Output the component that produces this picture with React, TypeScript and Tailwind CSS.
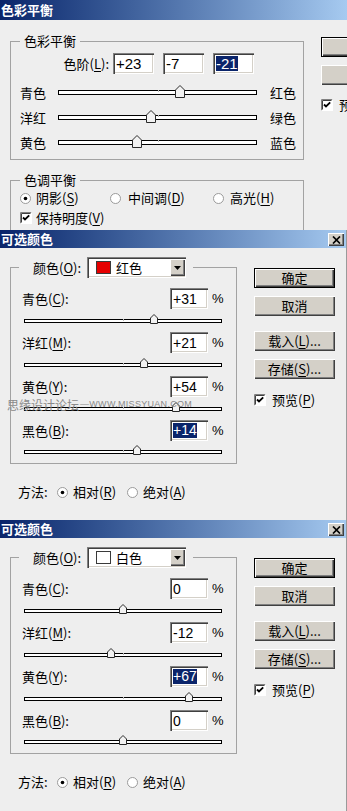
import React from "react";

type Kids = { children?: React.ReactNode };

const RAISED =
  "bg-[#d4d0c8] shadow-[inset_1px_1px_0_#ffffff,inset_-1px_-1px_0_#404040,inset_-2px_-2px_0_#808080]";
const RAISED_DEF =
  "bg-[#d4d0c8] border border-black shadow-[inset_1px_1px_0_#ffffff,inset_-1px_-1px_0_#404040,inset_-2px_-2px_0_#808080]";
const SUNKEN =
  "bg-white shadow-[inset_1px_1px_0_#808080,inset_2px_2px_0_#404040,inset_-1px_-1px_0_#ffffff,inset_-2px_-2px_0_#d4d0c8]";

function U({ children }: Kids) {
  return <span className="underline underline-offset-2 decoration-1">{children}</span>;
}

function Radio({ checked }: { checked?: boolean }) {
  return (
    <svg width="11" height="11" viewBox="0 0 11 11" className="shrink-0">
      <circle cx="5.5" cy="5.5" r="5" fill="#ffffff" stroke="#9a9a9a" strokeWidth="1" />
      {checked && <circle cx="5.5" cy="5.5" r="1.8" fill="#000000" />}
    </svg>
  );
}

function Check() {
  return (
    <svg width="12" height="12" viewBox="0 0 12 12" className="shrink-0">
      <rect x="0" y="0" width="12" height="12" fill="#ffffff" />
      <path d="M0.5 11.5 V0.5 H11.5" stroke="#808080" fill="none" />
      <path d="M1.5 10.5 V1.5 H10.5" stroke="#404040" fill="none" />
      <path d="M11.5 0.5 V11.5 H0.5" stroke="#ffffff" fill="none" />
      <path d="M3 5.5 L5 7.5 L9.2 3.3" stroke="#000000" strokeWidth="1.8" fill="none" />
    </svg>
  );
}

function CloseBtn() {
  return (
    <div className={`w-[16px] h-[13px] flex items-center justify-center ${RAISED}`}>
      <svg width="9" height="8" viewBox="0 0 9 8">
        <path d="M1 0.5 L8 7.5 M8 0.5 L1 7.5" stroke="#000000" strokeWidth="1.7" />
      </svg>
    </div>
  );
}

function Track({ value, big }: { value: number; big?: boolean }) {
  const w = big ? 199 : 198;
  const tw = big ? 10 : 8;
  const th = big ? 13 : 10;
  const center = (w - 2) / 2;
  const half = big ? 99 : 98.5;
  const pos = center + (value / 100) * half;
  return (
    <div
      className={
        big
          ? "relative w-[199px] h-[5px] ml-[12px] border border-black bg-white"
          : "relative w-[198px] h-[4px] ml-[13px] border border-black bg-white"
      }
    >
      <div className="absolute top-[-1px] w-px h-[2px] bg-[#b8b8b8]" style={{ left: Math.round(center) }} />
      <svg
        className="absolute"
        style={{ left: Math.round(pos - tw / 2), top: -6 }}
        width={tw}
        height={th}
        viewBox={`0 0 ${tw} ${th}`}
      >
        <polygon
          points={`0.5,${th - 0.5} 0.5,${tw / 2} ${tw / 2},0.5 ${tw - 0.5},${tw / 2} ${tw - 0.5},${th - 0.5}`}
          fill="#f2f2f2"
          stroke="#2a2a2a"
          strokeWidth="1"
        />
      </svg>
    </div>
  );
}

function Field({ value, selected, big }: { value: string; selected?: boolean; big?: boolean }) {
  return (
    <div
      className={`${
        big ? "w-[41px] h-[21px] text-[15px]" : "w-[38px] h-[21px] text-[14px]"
      } ${SUNKEN} flex items-center pl-[3px] font-['Liberation_Sans',sans-serif] leading-none`}
    >
      {selected ? (
        <span className="bg-[#0a246a] text-white leading-[15px] inline-block">{value}</span>
      ) : (
        <span>{value}</span>
      )}
    </div>
  );
}

function ColorBalance() {
  return (
    <div className="h-[230px] shrink-0 overflow-hidden bg-[#eeeeee] flex flex-col">
      <div className="h-[20px] shrink-0 bg-gradient-to-r from-[#0a246a] to-[#a6caf0] text-white font-bold text-[13px] leading-[20px] pl-[1px]">
        色彩平衡
      </div>
      <div className="flex">
        <div className="ml-[10px] w-[294px] shrink-0">
          <fieldset className="mt-[14px] border border-[#a2a2a2] pb-[4px]">
            <legend className="ml-[9px] px-[4px] text-[13px] leading-[14px]">色彩平衡</legend>
            <div className="flex items-center h-[21px] mt-[5px]">
              <div className="w-[98px] text-right leading-[21px]">
                色阶(<U>L</U>):
              </div>
              <div className="ml-[4px]">
                <Field big value="+23" />
              </div>
              <div className="ml-[9px]">
                <Field big value="-7" />
              </div>
              <div className="ml-[9px]">
                <Field big value="-21" selected />
              </div>
            </div>
            <div className="mt-[6px]">
              {[
                ["青色", "红色", 23],
                ["洋红", "绿色", -7],
                ["黄色", "蓝色", -21],
              ].map(([l, r, v]) => (
                <div key={l as string} className="flex items-center h-[25px]">
                  <span className="ml-[9px] w-[26px] leading-[25px]">{l}</span>
                  <Track big value={v as number} />
                  <span className="ml-[13px] leading-[25px]">{r}</span>
                </div>
              ))}
            </div>
          </fieldset>
          <fieldset className="mt-[13px] border border-[#a2a2a2] pb-[20px]">
            <legend className="ml-[9px] px-[4px] text-[13px] leading-[14px]">色调平衡</legend>
            <div className="flex items-center h-[20px] mt-[1px]">
              <div className="ml-[9px] w-[90px] flex items-center">
                <Radio checked />
                <span className="ml-[5px]">
                  阴影(<U>S</U>)
                </span>
              </div>
              <div className="w-[103px] flex items-center">
                <Radio />
                <span className="ml-[7px]">
                  中间调(<U>D</U>)
                </span>
              </div>
              <div className="flex items-center">
                <Radio />
                <span className="ml-[6px]">
                  高光(<U>H</U>)
                </span>
              </div>
            </div>
            <div className="flex items-center h-[20px]">
              <div className="ml-[9px] flex items-center">
                <Check />
                <span className="ml-[4px]">
                  保持明度(<U>V</U>)
                </span>
              </div>
            </div>
          </fieldset>
        </div>
        <div className="ml-[17px] w-[80px] shrink-0 mt-[17px] flex flex-col">
          <div className={`h-[20px] ${RAISED_DEF}`} />
          <div className={`h-[20px] mt-[8px] ${RAISED}`} />
          <div className="mt-[14px] flex items-center h-[12px]">
            <Check />
            <span className="ml-[6px] whitespace-nowrap">
              预览(<U>P</U>)
            </span>
          </div>
        </div>
      </div>
    </div>
  );
}

const ROWS: [string, string][] = [
  ["青色", "C"],
  ["洋红", "M"],
  ["黄色", "Y"],
  ["黑色", "B"],
];

function SelectiveColor({
  swatch,
  name,
  values,
  sel,
  watermark,
  tall,
}: {
  swatch: "red" | "white";
  name: string;
  values: string[];
  sel: number;
  watermark?: boolean;
  tall?: boolean;
}) {
  return (
    <div
      className={`${
        tall ? "h-[291px]" : "h-[290px]"
      } shrink-0 relative bg-[#eeeeee] flex flex-col border-r border-[#9a9a9a]`}
    >
      <div className="h-[18px] shrink-0 bg-gradient-to-r from-[#0a246a] to-[#a6caf0] flex items-start justify-between pr-[2px]">
        <span className="text-white font-bold text-[13px] leading-[18px] pl-[1px]">可选颜色</span>
        <div className="mt-[3px]">
          <CloseBtn />
        </div>
      </div>
      <div className="flex">
        <div className="ml-[10px] w-[227px] shrink-0">
          <fieldset className="mt-[9px] border border-[#a2a2a2]">
            <legend className="ml-[8px] pl-[14px] pr-[7px]">
              <div className="flex items-center h-[21px]">
                <span className="w-[54px] leading-[21px]">
                  颜色(<U>O</U>):
                </span>
                <div className={`w-[99px] h-[21px] ${SUNKEN} flex items-center`}>
                  <span
                    className={
                      swatch === "red"
                        ? "ml-[9px] w-[15px] h-[13px] border border-[#3a3a3a] bg-[#e60000]"
                        : "ml-[9px] w-[15px] h-[13px] border border-[#3a3a3a] bg-white"
                    }
                  />
                  <span className="ml-[5px] leading-[17px]">{name}</span>
                  <div className={`ml-auto mr-[1px] w-[15px] h-[17px] flex items-center justify-center ${RAISED}`}>
                    <svg width="7" height="4" viewBox="0 0 7 4">
                      <path d="M0 0 H7 L3.5 4 Z" fill="#000000" />
                    </svg>
                  </div>
                </div>
              </div>
            </legend>
            {ROWS.map(([label, k], i) => (
              <div key={k} className={i === 0 ? "mt-[10px]" : ""}>
                <div className="flex items-center h-[21px]">
                  <span className="ml-[11px] w-[148px] leading-[21px]">
                    {label}(<U>{k}</U>):
                  </span>
                  <Field value={values[i]} selected={i === sel} />
                  <span className="ml-[4px] font-['Liberation_Sans',sans-serif] text-[13px]">%</span>
                </div>
                <div className={i === 3 ? "flex items-center h-[22px]" : "flex items-center h-[23px]"}>
                  <Track value={parseInt(values[i], 10)} />
                </div>
              </div>
            ))}
          </fieldset>
          <div className="mt-[18px] flex items-center h-[20px]">
            <span className="ml-[8px] w-[39px]">方法:</span>
            <Radio checked />
            <span className="ml-[5px] w-[54px]">
              相对(<U>R</U>)
            </span>
            <Radio />
            <span className="ml-[5px]">
              绝对(<U>A</U>)
            </span>
          </div>
        </div>
        <div className="ml-[17px] w-[81px] shrink-0 mt-[20px] flex flex-col">
          <div className={`h-[20px] flex items-center justify-center ${RAISED_DEF}`}>确定</div>
          <div className={`h-[20px] mt-[8px] flex items-center justify-center ${RAISED}`}>取消</div>
          <div className={`h-[20px] mt-[15px] flex items-center justify-center ${RAISED}`}>
            <span>
              载入(<U>L</U>)...
            </span>
          </div>
          <div className={`h-[20px] mt-[8px] flex items-center justify-center ${RAISED}`}>
            <span>
              存储(<U>S</U>)...
            </span>
          </div>
          <div className="mt-[14px] flex items-center h-[14px]">
            <Check />
            <span className="ml-[6px]">
              预览(<U>P</U>)
            </span>
          </div>
        </div>
      </div>
      {watermark && (
        <div className="absolute left-[7px] top-[168px] h-[13px] flex items-center text-[#8a8a8a] whitespace-nowrap pointer-events-none">
          <span className="text-[12px] leading-[13px]">思缘设计论坛</span>
          <span className="ml-[1px] text-[9px] leading-[13px] font-['Liberation_Sans',sans-serif] tracking-[0.3px]">
            —WWW.MISSYUAN.COM
          </span>
        </div>
      )}
    </div>
  );
}

export default function App() {
  return (
    <div className="w-[347px] h-[811px] overflow-hidden bg-[#eeeeee] flex flex-col font-['Noto_Sans_CJK_SC',sans-serif] text-[13px] text-black">
      <ColorBalance />
      <SelectiveColor swatch="red" name="红色" values={["+31", "+21", "+54", "+14"]} sel={3} watermark />
      <SelectiveColor swatch="white" name="白色" values={["0", "-12", "+67", "0"]} sel={2} tall />
    </div>
  );
}
